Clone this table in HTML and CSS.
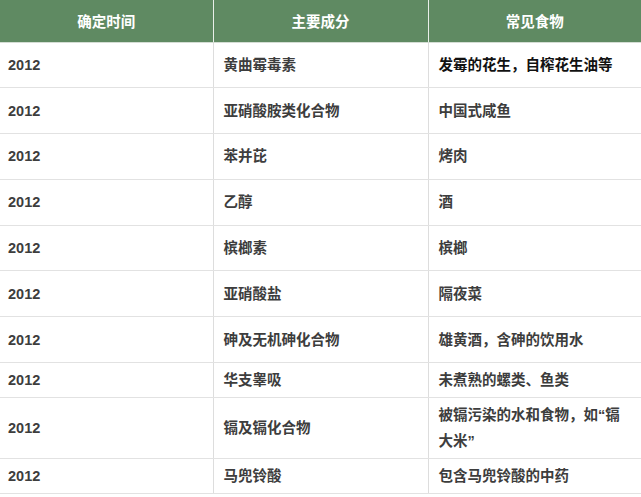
FILE: index.html
```html
<!DOCTYPE html>
<html lang="zh">
<head>
<meta charset="utf-8">
<title>致癌物</title>
<link rel="stylesheet" href="styles.css">
</head>
<body>
<table class="tbl">
  <colgroup>
    <col class="c1"><col class="c2"><col class="c3">
  </colgroup>
  <thead>
    <tr><th>确定时间</th><th>主要成分</th><th>常见食物</th></tr>
  </thead>
  <tbody>
    <tr class="tall"><td>2012</td><td>黄曲霉毒素</td><td class="dark">发霉的花生，自榨花生油等</td></tr>
    <tr class="tall"><td>2012</td><td>亚硝酸胺类化合物</td><td>中国式咸鱼</td></tr>
    <tr class="tall"><td>2012</td><td>苯并芘</td><td>烤肉</td></tr>
    <tr class="tall"><td>2012</td><td>乙醇</td><td>酒</td></tr>
    <tr class="tall"><td>2012</td><td>槟榔素</td><td>槟榔</td></tr>
    <tr class="tall"><td>2012</td><td>亚硝酸盐</td><td>隔夜菜</td></tr>
    <tr class="tall"><td>2012</td><td>砷及无机砷化合物</td><td>雄黄酒，含砷的饮用水</td></tr>
    <tr><td>2012</td><td>华支睾吸</td><td>未煮熟的螺类、鱼类</td></tr>
    <tr><td>2012</td><td>镉及镉化合物</td><td>被镉污染的水和食物，如“镉大米”</td></tr>
    <tr><td>2012</td><td>马兜铃酸</td><td>包含马兜铃酸的中药</td></tr>
  </tbody>
</table>
</body>
</html>
```
FILE: styles.css
```css
html, body {
  margin: 0;
  padding: 0;
  background: #ffffff;
}
.tbl {
  width: 641px;
  border-collapse: collapse;
  table-layout: fixed;
  font-family: "Liberation Sans", "Noto Sans CJK SC", sans-serif;
  font-size: 14.5px;
  font-weight: 700;
  color: #3d3d3d;
}
.c1 { width: 213px; }
.c2 { width: 215px; }
.c3 { width: 213px; }
.tbl th {
  background: #5f8a62;
  color: #ffffff;
  height: 42px;
  padding: 0 10px;
  text-align: center;
  font-weight: 700;
  border-left: 1px solid #e9efe9;
  border-bottom: 1px solid #d4ddd4;
  box-sizing: border-box;
}
.tbl th:first-child { border-left: none; }
.tbl td {
  padding: 4px 10px;
  line-height: 26px;
  border-left: 1px solid #dddddd;
  border-bottom: 1px solid #e2e2e2;
  text-align: left;
  vertical-align: middle;
}
.tbl td:first-child {
  border-left: none;
  padding-left: 8px;
}
.tbl tr.tall td {
  height: 36.8px;
}
.tbl td.dark {
  color: #111111;
}
```
